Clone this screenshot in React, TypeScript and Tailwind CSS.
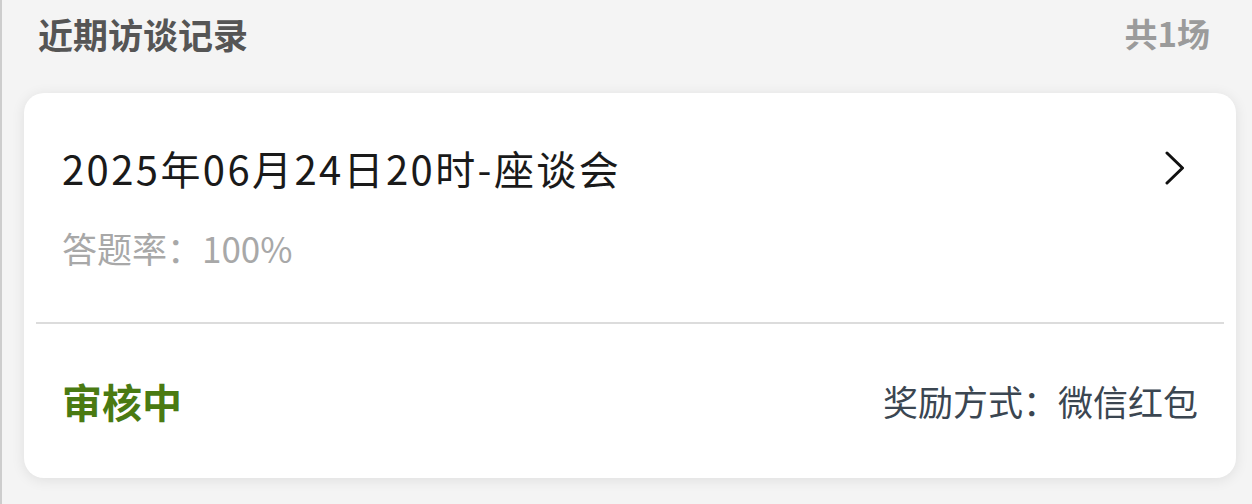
const font = "font-['Noto_Sans_CJK_SC','Noto_Sans',sans-serif]";

export default function App() {
    return (
        <div
            className={`${font} h-[504px] overflow-hidden border-l-2 border-[#cdcdcd] bg-[#f4f4f4] pl-[22px] pr-[16px]`}
        >
            <div className="flex h-[68px] items-center justify-between pl-[14px] pr-[26px]">
                <h2 className="text-[35px] font-bold text-[#555555]">
                    近期访谈记录
                </h2>
                <span className="text-[33px] font-bold text-[#9b9b9b]">
                    共1场
                </span>
            </div>

            <div className="mt-[25px] rounded-[20px] bg-white shadow-[0_2px_14px_rgba(0,0,0,0.09)]">
                <div className="px-[38px] pb-[52px] pt-[51px]">
                    <div className="flex h-[48px] items-center justify-between">
                        <h3 className="text-[40px] leading-[48px] tracking-[2.4px] text-[#1a1a1a]">
                            2025年06月24日20时-座谈会
                        </h3>
                        <svg
                            width="20"
                            height="34"
                            viewBox="0 0 20 34"
                            fill="none"
                            className="mr-[13px]"
                        >
                            <polyline
                                points="2,2 17.5,17 2,32"
                                stroke="#111111"
                                strokeWidth="3"
                                strokeLinecap="round"
                                strokeLinejoin="round"
                            />
                        </svg>
                    </div>

                    <p className="mt-[34px] text-[35px] leading-[44px] text-[#a8a8a8]">
                        答题率：100%
                    </p>
                </div>

                <div className="mx-3 border-t-2 border-[#dcdcdc]" />

                <div className="flex h-[154px] items-center justify-between px-[38px]">
                    <span className="text-[40px] font-bold text-[#4a7a12]">
                        审核中
                    </span>
                    <span className="text-[35px] text-[#3b4651]">
                        奖励方式：微信红包
                    </span>
                </div>
            </div>
        </div>
    );
}
